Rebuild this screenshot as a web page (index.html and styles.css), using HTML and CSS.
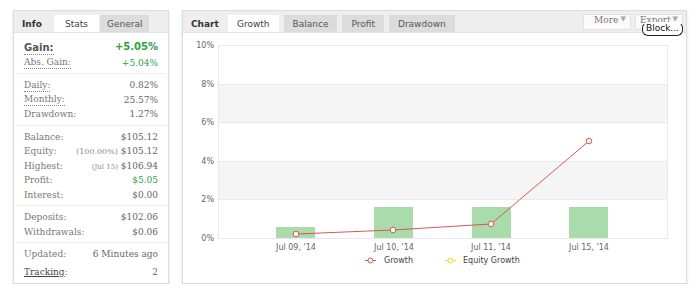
FILE: index.html
```html
<!DOCTYPE html>
<html lang="en">
<head>
    <meta charset="UTF-8">
    <title>Account stats</title>
    <link rel="stylesheet" href="styles.css">
</head>
<body>
<div class="page">

    <!-- s stats panel -->
    <div class="panel side">
        <div class="tabs">
            <span class="title">Info</span>
            <span class="tab on">Stats</span>
            <span class="tab">General</span>
        </div>
        <div class="group">
            <div class="row gain"><span class="lbl dot">Gain:</span><span class="val green">+5.05%</span></div>
            <div class="row"><span class="lbl dot">Abs. Gain:</span><span class="val green">+5.04%</span></div>
        </div>
        <div class="group">
            <div class="row"><span class="lbl dot">Daily:</span><span class="val">0.82%</span></div>
            <div class="row"><span class="lbl dot">Monthly:</span><span class="val">25.57%</span></div>
            <div class="row"><span class="lbl">Drawdown:</span><span class="val">1.27%</span></div>
        </div>
        <div class="group">
            <div class="row"><span class="lbl">Balance:</span><span class="val">$105.12</span></div>
            <div class="row"><span class="lbl">Equity:</span><span class="val"><small>(100.00%)</small> $105.12</span></div>
            <div class="row"><span class="lbl">Highest:</span><span class="val"><small class="tiny">(Jul 15)</small> $106.94</span></div>
            <div class="row"><span class="lbl">Profit:</span><span class="val green">$5.05</span></div>
            <div class="row"><span class="lbl">Interest:</span><span class="val">$0.00</span></div>
        </div>
        <div class="group">
            <div class="row"><span class="lbl">Deposits:</span><span class="val">$102.06</span></div>
            <div class="row"><span class="lbl">Withdrawals:</span><span class="val">$0.06</span></div>
        </div>
        <div class="group last">
            <div class="row"><span class="lbl">Updated:</span><span class="val">6 Minutes ago</span></div>
            <div class="row track"><span class="lbl"><a>Tracking</a>:</span><span class="val">2</span></div>
        </div>
    </div>
    <!-- e stats panel -->

    <!-- s chart panel -->
    <div class="panel main">
        <div class="tabs">
            <span class="title">Chart</span>
            <span class="tab on">Growth</span>
            <span class="tab">Balance</span>
            <span class="tab">Profit</span>
            <span class="tab">Drawdown</span>
            <span class="tools">
                <span class="btn">More <i>&#9660;</i></span>
                <span class="btn export">Export <i>&#9660;</i><b class="block">Block...</b></span>
            </span>
        </div>
        <svg class="chart" width="503" height="250" viewBox="0 0 503 250">
            <rect x="35.5" y="51.5" width="449" height="38" fill="#f5f5f5"/>
            <rect x="35.5" y="128.5" width="449" height="38" fill="#f5f5f5"/>
            <g stroke="#e9e9e9" stroke-width="1">
                <line x1="35" y1="12.5" x2="485" y2="12.5"/>
                <line x1="35" y1="51.5" x2="485" y2="51.5"/>
                <line x1="35" y1="89.5" x2="485" y2="89.5"/>
                <line x1="35" y1="128.5" x2="485" y2="128.5"/>
                <line x1="35" y1="166.5" x2="485" y2="166.5"/>
                <line x1="35" y1="205.5" x2="485" y2="205.5"/>
                <line x1="35.5" y1="12" x2="35.5" y2="206"/>
                <line x1="484.5" y1="12" x2="484.5" y2="206"/>
            </g>
            <g fill="#aadbaa">
                <rect x="93" y="194" width="39" height="11"/>
                <rect x="191" y="174" width="39" height="31"/>
                <rect x="289" y="174" width="39" height="31"/>
                <rect x="386" y="174" width="39" height="31"/>
            </g>
            <polyline points="113,201 210,197 308,191 406,108" fill="none" stroke="#dd5555" stroke-width="1"/>
            <g fill="#fff" stroke="#dd5555" stroke-width="1">
                <circle cx="113" cy="201" r="2.8"/>
                <circle cx="210" cy="197" r="2.8"/>
                <circle cx="308" cy="191" r="2.8"/>
                <circle cx="406" cy="108" r="2.8"/>
            </g>
            <g class="axis" text-anchor="end">
                <text x="31" y="15">10%</text>
                <text x="31" y="54">8%</text>
                <text x="31" y="92">6%</text>
                <text x="31" y="131">4%</text>
                <text x="31" y="169">2%</text>
                <text x="31" y="208">0%</text>
            </g>
            <g class="axis" text-anchor="middle">
                <text x="113" y="217">Jul 09, '14</text>
                <text x="211" y="217">Jul 10, '14</text>
                <text x="308" y="217">Jul 11, '14</text>
                <text x="406" y="217">Jul 15, '14</text>
            </g>
            <g class="legend">
                <line x1="182" y1="227.5" x2="193" y2="227.5" stroke="#dd5555"/>
                <circle cx="187.5" cy="227.5" r="2.5" fill="#fff" stroke="#dd5555"/>
                <text x="201" y="230">Growth</text>
                <line x1="262" y1="227.5" x2="273" y2="227.5" stroke="#e8e020"/>
                <circle cx="267.5" cy="227.5" r="2.5" fill="#fff" stroke="#e8e020"/>
                <text x="280" y="230">Equity Growth</text>
            </g>
        </svg>
    </div>
    <!-- e chart panel -->

</div>
</body>
</html>
```
FILE: styles.css
```css
/* 页面整体 */
body { margin: 0; background: #fff; font-family: "DejaVu Serif", serif; color: #666; }
.page { display: flex; gap: 13px; padding: 10px 0 0 13px; }

.panel { position: relative; box-sizing: border-box; height: 274px; border: 1px solid #dcdcdc; background: #fff; box-shadow: 0 2px 3px rgba(0,0,0,.12); }
.side { width: 156px; }
.main { width: 505px; }

/* 标签栏 */
.tabs { display: flex; align-items: flex-end; height: 21px; background: #eeeeee; border-bottom: 1px solid #e4e4e4; font: 9px "DejaVu Sans", sans-serif; }
.tabs .title { align-self: center; padding: 4px 0 0 8px; font-weight: bold; color: #333; }
.tabs .tab { height: 17px; line-height: 18px; padding: 0 8px; margin-left: 1px; background: #dcdcdc; color: #555; }
.tabs .tab.on { background: #fff; color: #444; }

.side .title { width: 31px; }
.side .tab.on { padding: 0 11px; }
.side .tab { padding: 0 7px; }

.main .title { width: 37px; }
.main .tab { margin-left: 5px; padding: 0 9px; }
.main .tab.on { margin-left: 0; }

/* 右上按钮 */
.tools { display: flex; gap: 4px; margin-left: auto; margin-right: 3px; align-self: flex-start; margin-top: 3px; }
.btn { position: relative; width: 36px; height: 14px; line-height: 14px; padding: 0 0 0 10px; white-space: nowrap; border: 1px solid #e2e2e2; background: #fafafa; font: 9px "DejaVu Serif", serif; color: #777; }
.btn.export { width: 42px; padding-left: 4px; }
.btn i { position: absolute; right: 4px; font-style: normal; font-size: 7px; color: #aaa; }
.block { position: absolute; left: 6px; top: 7px; padding: 0 3px; height: 12px; line-height: 12px; background: #fff; border: 1px solid #222; border-top-color: transparent; border-radius: 6px; font: 9px "DejaVu Sans", sans-serif; font-weight: normal; color: #111; }

/* 数据行 */
.group { margin: 0 2px; padding: 4px 8px 3px; border-bottom: 1px solid #eeeeee; }
.side .tabs + .group { margin-top: 4px; }
.group.last { border-bottom: 0; }
.row { display: flex; justify-content: space-between; height: 14.5px; line-height: 14.5px; font-size: 9px; white-space: nowrap; }
.row .lbl { color: #777; }
.row .dot { border-bottom: 1px dotted #888; line-height: 12px; align-self: center; }
.row.gain { font: bold 10px "DejaVu Sans", sans-serif; }
.row.gain .lbl { color: #555; }
.row.track { margin-top: 3px; }
.row a { color: #444; text-decoration: underline; }
.val small { font-size: 8px; color: #888; }
.val small.tiny { font-size: 7px; }
.green { color: #2aa244 !important; }

/* 图表 */
.chart { display: block; }
.axis { font: 8px "DejaVu Sans", sans-serif; fill: #666; }
.legend text { font: 8px "DejaVu Sans", sans-serif; fill: #444; }
```
